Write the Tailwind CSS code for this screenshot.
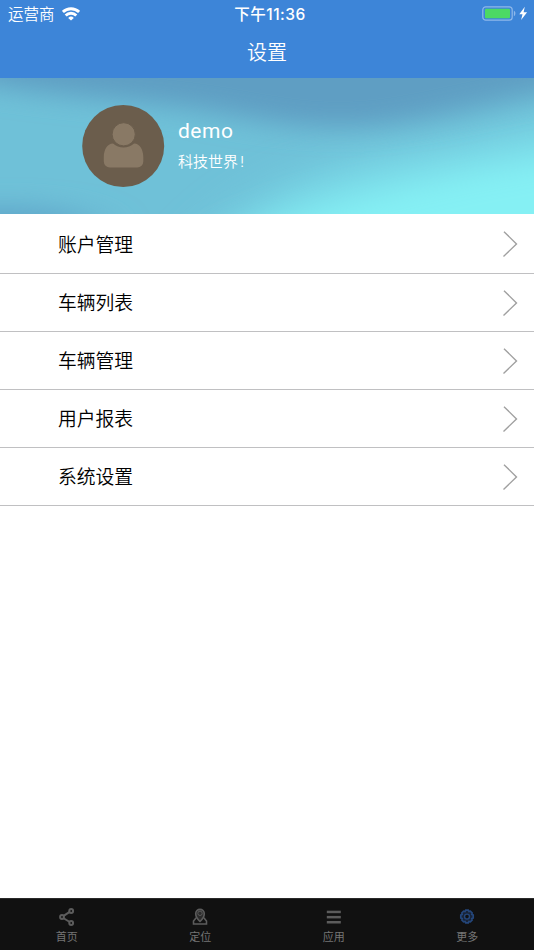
<!DOCTYPE html>
<html lang="zh-CN">
<head>
    <meta charset="UTF-8">
    <meta name="viewport" content="width=device-width, initial-scale=1.0">
    <title>设置</title>
    <script src="https://cdn.jsdelivr.net/npm/@tailwindcss/browser@4"></script>
</head>
<body class="bg-white font-['Inter','Noto_Sans_CJK_SC',sans-serif]">
    <div class="flex flex-col h-[950px] w-[534px] overflow-hidden">
        <!-- Header -->
        <header class="h-[78px] shrink-0 bg-[#3d85d8] text-white">
            <div class="grid grid-cols-3 items-center h-[27px] pl-2 pr-[6px]">
                <div class="flex items-center gap-[7px]">
                    <span class="pt-[2px] text-[15.5px] leading-none font-[350]">运营商</span>
                    <svg class="w-[18px] h-[14px]" viewBox="0 0 18 14" fill="none" stroke="currentColor" stroke-width="2.9">
                        <path d="M.9 5a11.6 11.6 0 0 1 16.2 0"/>
                        <path d="M3.7 8.5a7.5 7.5 0 0 1 10.6 0"/>
                        <path d="M9 13.5 6.2 10.9a4 4 0 0 1 5.6 0z" fill="currentColor" stroke="none"/>
                    </svg>
                </div>
                <span class="pl-1 pt-[2px] text-center text-[15.5px] leading-none font-medium tracking-[0.5px] whitespace-nowrap">下午11:36</span>
                <div class="flex justify-end items-center">
                    <svg class="w-[46px] h-[15px]" viewBox="0 0 46 15">
                        <rect x=".8" y=".8" width="29.4" height="13.4" rx="3" fill="none" stroke="#8fb8ea" stroke-width="1.2"/>
                        <rect x="3" y="2.8" width="25" height="9.4" rx="1" fill="#4cd964"/>
                        <path d="M31.9 4.8c2 .8 2 4.6 0 5.4z" fill="#8fb8ea"/>
                        <path d="M42.8.8 37.300 8.200h3.200l-1.400 5.900 6-7.900h-3.500z" fill="#fff"/>
                    </svg>
                </div>
            </div>
            <h1 class="pt-px text-center text-[20px] leading-[50px] font-[350]">设置</h1>
        </header>

        <!-- Profile banner -->
        <section class="relative h-[136px] shrink-0 overflow-hidden bg-[#6fc1d8]">
            <svg class="absolute inset-0 w-full h-full" viewBox="0 0 534 136" preserveAspectRatio="none">
                <defs>
                    <filter id="soft" x="-50%" y="-100%" width="200%" height="300%">
                        <feGaussianBlur stdDeviation="26 13"/>
                    </filter>
                    <filter id="softer" x="-50%" y="-100%" width="200%" height="300%">
                        <feGaussianBlur stdDeviation="30 16"/>
                    </filter>
                </defs>
                <path d="M195 190C250 115 310 88 390 74S510 50 620 25V220H195z" fill="#78d6e5" filter="url(#softer)"/>
                <path d="M230 165C300 125 420 94 620 66V220H230z" fill="#85f0f4" filter="url(#softer)"/>
                <path d="M-40-60H640V-2C540 12 470 34 400 45S275 46 215 34 90 24-40 2z" fill="#5f9ec3" filter="url(#soft)"/>
                <ellipse cx="5" cy="148" rx="90" ry="19" fill="#5fa5c9" filter="url(#soft)"/>
            </svg>
            <div class="relative flex items-center h-full pl-[82px]">
                <svg class="w-[83px] h-[82px] shrink-0" viewBox="0 0 83 82">
                    <ellipse cx="41.2" cy="41" rx="41" ry="41" fill="#6b5d4c"/>
                    <path d="M31 38.5c-6 0-9.200 7-9.200 13.500v4.500a6 6 0 0 0 6 6h27.500a6 6 0 0 0 6-6V52c0-6.500-3.200-13.500-9.200-13.500C46 43.800 37 43.800 31 38.500z" fill="#897965"/>
                    <circle cx="41.7" cy="29.3" r="11.6" fill="#897965" stroke="#6b5d4c"/>
                </svg>
                <div class="ml-[13px] pb-[3px] text-white">
                    <p class="font-['Roboto',sans-serif] text-[21px] leading-[28px] tracking-[0.5px]">demo</p>
                    <p class="text-[15px] leading-[22px] mt-[6px] font-[350]">科技世界<span class="pl-[2px]">!</span></p>
                </div>
            </div>
        </section>

        <!-- Settings list -->
        <ul class="flex-1 text-[18.8px] font-[350] text-black">
            <li class="flex items-center justify-between h-[60px] pl-[58px] pr-4 border-b border-[#c0c0c2]">
                <span class="pt-[5px]">账户管理</span>
                <svg class="w-[16px] h-[26px]" viewBox="0 0 16 26" fill="none" stroke="#a0a0a0" stroke-width="1.4"><path d="M2 .7 14.500 13 1.500 25.400"/></svg>
            </li>
            <li class="flex items-center justify-between h-[58px] pl-[58px] pr-4 border-b border-[#c0c0c2]">
                <span class="pt-[4px]">车辆列表</span>
                <svg class="w-[16px] h-[26px]" viewBox="0 0 16 26" fill="none" stroke="#a0a0a0" stroke-width="1.4"><path d="M2 .7 14.500 13 1.500 25.400"/></svg>
            </li>
            <li class="flex items-center justify-between h-[58px] pl-[58px] pr-4 border-b border-[#c0c0c2]">
                <span class="pt-[4px]">车辆管理</span>
                <svg class="w-[16px] h-[26px]" viewBox="0 0 16 26" fill="none" stroke="#a0a0a0" stroke-width="1.4"><path d="M2 .7 14.500 13 1.500 25.400"/></svg>
            </li>
            <li class="flex items-center justify-between h-[58px] pl-[58px] pr-4 border-b border-[#c0c0c2]">
                <span class="pt-[4px]">用户报表</span>
                <svg class="w-[16px] h-[26px]" viewBox="0 0 16 26" fill="none" stroke="#a0a0a0" stroke-width="1.4"><path d="M2 .7 14.500 13 1.500 25.400"/></svg>
            </li>
            <li class="flex items-center justify-between h-[58px] pl-[58px] pr-4 border-b border-[#c0c0c2]">
                <span class="pt-[4px]">系统设置</span>
                <svg class="w-[16px] h-[26px]" viewBox="0 0 16 26" fill="none" stroke="#a0a0a0" stroke-width="1.4"><path d="M2 .7 14.500 13 1.500 25.400"/></svg>
            </li>
        </ul>

        <!-- Tab bar -->
        <nav class="grid grid-cols-4 h-[52px] shrink-0 bg-[#111111] border-t border-[#2a2a2a] text-[11px] leading-[16px] text-[#757575]">
            <a class="flex flex-col items-center pt-[9px]">
                <svg class="w-4 h-[18px] text-[#5c5c5c]" viewBox="0 0 16 18" fill="none" stroke="currentColor" stroke-width="2">
                    <path d="M10.700 3.800 4.200 8.200M4.200 10l6.500 4"/>
                    <circle cx="12.2" cy="3" r="1.9"/>
                    <circle cx="3" cy="9" r="1.9"/>
                    <circle cx="12.2" cy="15" r="1.9"/>
                </svg>
                <span class="mt-[3px]">首页</span>
            </a>
            <a class="flex flex-col items-center pt-[9px]">
                <svg class="w-4 h-[18px] text-[#5c5c5c]" viewBox="0 0 16 18" fill="none" stroke="currentColor" stroke-width="1.6">
                    <path d="M8 13.500C5.200 10.800 3.700 8.500 3.700 5.700a4.300 4.300 0 0 1 8.600 0c0 2.800-1.500 5.100-4.300 7.800z" fill="currentColor" fill-opacity=".35"/>
                    <circle cx="8" cy="5.3" r="2.2" stroke-width="1"/>
                    <path d="M4.200 9.800 1.500 13v3h13v-3l-2.700-3.200"/>
                </svg>
                <span class="mt-[3px]">定位</span>
            </a>
            <a class="flex flex-col items-center pt-[9px]">
                <svg class="w-4 h-[18px] text-[#5c5c5c]" viewBox="0 0 16 18" fill="currentColor">
                    <rect x=".8" y="2.7" width="14" height="2.5"/>
                    <rect x=".8" y="7.9" width="14" height="2.5"/>
                    <rect x=".8" y="13" width="14" height="2.5"/>
                </svg>
                <span class="mt-[3px]">应用</span>
            </a>
            <a class="flex flex-col items-center pt-[9px]">
                <svg class="w-4 h-[18px] text-[#24467a]" viewBox="0 0 16 18" fill="none" stroke="currentColor" stroke-width="1.7">
                    <path d="M6.700 2.200h2.600l.6 1.300 1.500-.4 1.800 1.800-.4 1.500 1.400.6v3l-1.400.6.4 1.500-1.800 1.800-1.500-.4-.6 1.400H6.700l-.6-1.400-1.500.4-1.800-1.800.4-1.500-1.400-.6V7l1.400-.6-.4-1.500 1.800-1.800 1.500.4z" fill="currentColor" fill-opacity=".35"/>
                    <circle cx="8" cy="8.6" r="2.5" stroke-width="1.4" fill="#111"/>
                </svg>
                <span class="mt-[3px]">更多</span>
            </a>
        </nav>
    </div>
</body>
</html>
